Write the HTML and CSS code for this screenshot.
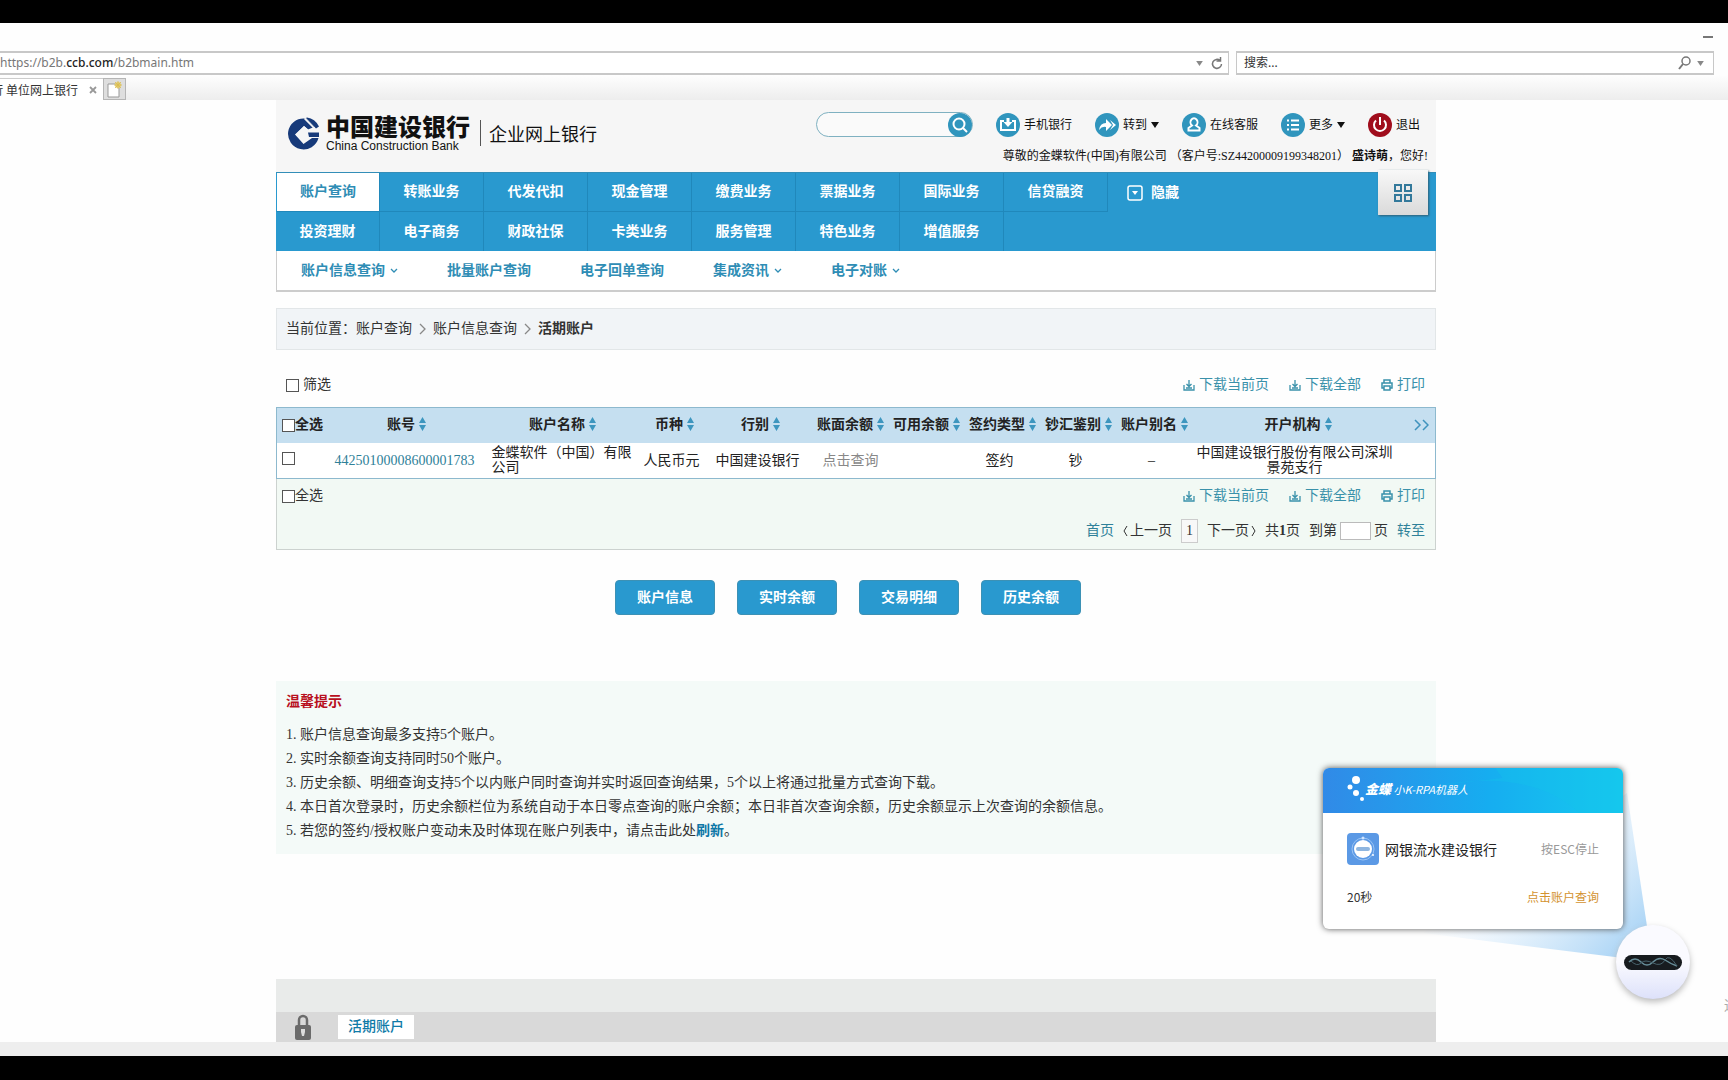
FILE: index.html
```html
<!DOCTYPE html>
<html lang="zh-CN">
<head>
<meta charset="utf-8">
<title>单位网上银行</title>
<link rel="stylesheet" href="styles.css">
</head>
<body>
<svg class="defs" aria-hidden="true">
  <symbol id="caret" viewBox="0 0 8 6"><path d="M1 1l3 3 3-3" fill="none" stroke="currentColor" stroke-width="1.3"/></symbol>
  <symbol id="tri" viewBox="0 0 8 6"><path d="M0 0h8L4 6z" fill="currentColor"/></symbol>
  <symbol id="sort" viewBox="0 0 7 14"><path d="M0 6l3.500-6L7 6zM0 8h7l-3.500 6z" fill="#3d96bf"/></symbol>
  <symbol id="gt" viewBox="0 0 7 12"><path d="M1 1l5 5-5 5" fill="none" stroke="currentColor" stroke-width="1.300"/></symbol>
  <symbol id="dl" viewBox="0 0 12 12"><path d="M1 6v5h10V6M6 1v6M3.500 5L6 7.500 8.500 5M3 9h6" fill="none" stroke="currentColor" stroke-width="1.300"/></symbol>
  <symbol id="print" viewBox="0 0 12 12"><path d="M3 4V1h6v3M3 9H1V4h10v5H9M3 7h6v4H3z" fill="none" stroke="currentColor" stroke-width="1.500"/></symbol>
</svg>

<div class="screen">
  <div class="browser-title"><span class="minimize"></span></div>
  <div class="address-row">
    <div class="address"><span class="url">https://b2b.<b>ccb.com</b>/b2bmain.htm</span>
      <svg class="tri" width="7" height="5"><use href="#tri"/></svg>
      <svg width="12" height="14" viewBox="0 0 12 14"><path d="M9 4.500A4.500 4.500 0 1 0 10.500 8M9.500 1v4H5.500" fill="none" stroke="#777" stroke-width="1.500"/></svg>
    </div>
    <div class="web-search"><input type="text" aria-label="搜索" placeholder="搜索...">
      <svg width="13" height="14" viewBox="0 0 13 14"><circle cx="8" cy="5" r="4" fill="none" stroke="#777" stroke-width="1.500"/><path d="M5 8l-4 5" stroke="#777" stroke-width="2"/></svg>
      <svg class="tri" width="7" height="5"><use href="#tri"/></svg>
    </div>
    <span class="edge-dot"></span>
  </div>
  <div class="tab-row">
    <div class="tab"><span>行 单位网上银行</span>
      <button class="tab-close" type="button" aria-label="关闭"><svg width="8" height="8" viewBox="0 0 8 8"><path d="M1 1l6 6M7 1L1 7" stroke="#999" stroke-width="1.800"/></svg></button></div>
    <button class="tab-new" type="button" aria-label="新标签"><svg width="15" height="17" viewBox="0 0 15 17"><path d="M1 3h11v13H1z" fill="#fff" stroke="#999"/><circle cx="11" cy="4" r="3" fill="#e6cf74"/><path d="M11 0v8M7 4h8M8 1l6 6M14 1L8 7" stroke="#d8bb50" stroke-width=".8"/></svg></button>
  </div>

  <main class="viewport">
    <div class="page">
      <header class="header">
        <div class="brand">
          <svg width="33" height="33" viewBox="0 0 33 33"><path d="M18 1.500A15.500 15.500 0 1 0 31.500 21H25L16.500 27 8 17.500 17 9 21 12.500 27 10z" fill="#173a7a"/><path d="M17 9L8.500 17.500 16.500 25.500 22 20V16L23 14z" fill="#f6f6f6"/><path d="M20 .5q8 1 12 9l-3 2L19 1zM21 15.500h11v4.500H22z" fill="#173a7a"/><path d="M17.500 1.500l10 10" stroke="#f6f6f6" stroke-width="1.500"/></svg>
          <div class="bank"><strong>中国建设银行</strong><span>China Construction Bank</span></div>
          <span class="portal">企业网上银行</span>
        </div>
        <div class="header-right">
          <div class="tools">
            <form class="site-search"><input type="text" aria-label="站内搜索"><button type="button" aria-label="搜索"><svg width="24" height="24" viewBox="0 0 24 24"><circle cx="11" cy="11" r="5.500"/><path d="M15 15l4 4"/></svg></button></form>
            <a class="tool" href="#"><svg width="24" height="24" viewBox="0 0 24 24"><circle class="disc" cx="12" cy="12" r="12"/><path d="M8 8H5v9h14V8h-3"/><path class="solid" d="M10.500 5h3v4h3L12 14 7.500 9h3z"/></svg>手机银行</a>
            <a class="tool tool-go" href="#"><svg width="24" height="24" viewBox="0 0 24 24"><circle class="disc" cx="12" cy="12" r="12"/><path class="solid" d="M4 17q1-7 7-7V6l6 6-6 6v-4q-4-1-7 3zM15 7l6 5-6 5 3-5z"/></svg>转到<svg class="drop" width="8" height="6"><use href="#tri"/></svg></a>
            <a class="tool tool-chat" href="#"><svg width="24" height="24" viewBox="0 0 24 24"><circle class="disc" cx="12" cy="12" r="12"/><path d="M10 12.500a3.500 4 0 1 1 4 0l3.500 2.500v2.500h-11V15z"/></svg>在线客服</a>
            <a class="tool" href="#"><svg width="24" height="24" viewBox="0 0 24 24"><circle class="disc" cx="12" cy="12" r="12"/><path d="M6 7.500h2M10 7.500h8M6 12h2M10 12h8M6 16.500h2M10 16.500h8"/></svg>更多<svg class="drop" width="8" height="6"><use href="#tri"/></svg></a>
            <a class="tool tool-exit" href="#"><svg width="24" height="24" viewBox="0 0 24 24"><circle class="disc" cx="12" cy="12" r="12"/><path d="M8 7.500a6 6 0 1 0 8 0M12 4v8"/></svg>退出</a>
          </div>
          <p class="greeting"><span>尊敬的金蝶软件(中国)有限公司</span><span>（客户号:SZ44200009199348201）</span><span><b>盛诗萌</b>，您好!</span></p>
        </div>
      </header>

      <nav class="nav">
        <div class="nav-row nav-first">
          <a class="active" href="#">账户查询</a><a href="#">转账业务</a><a href="#">代发代扣</a><a href="#">现金管理</a><a href="#">缴费业务</a><a href="#">票据业务</a><a href="#">国际业务</a><a href="#">信贷融资</a>
          <button class="hide" type="button"><svg width="16" height="16" viewBox="0 0 16 16"><rect x="1" y="1" width="14" height="14" rx="2" fill="none" stroke="#fff" stroke-width="1.500"/><path d="M5 6h6l-3 4z" fill="#fff"/></svg>隐藏</button>
        </div>
        <div class="nav-row"><a href="#">投资理财</a><a href="#">电子商务</a><a href="#">财政社保</a><a href="#">卡类业务</a><a href="#">服务管理</a><a href="#">特色业务</a><a href="#">增值服务</a></div>
        <button class="grid-button" type="button" aria-label="全部功能"><svg width="18" height="18" viewBox="0 0 18 18"><path d="M1 1h6v6H1zM11 1h6v6h-6zM1 11h6v6H1zM11 11h6v6h-6z" fill="none" stroke="#33799b" stroke-width="2"/></svg></button>
      </nav>
      <nav class="subnav"><a href="#">账户信息查询<svg width="8" height="6"><use href="#caret"/></svg></a><a href="#">批量账户查询</a><a href="#">电子回单查询</a><a href="#">集成资讯<svg width="8" height="6"><use href="#caret"/></svg></a><a href="#">电子对账<svg width="8" height="6"><use href="#caret"/></svg></a></nav>

      <div class="crumbs"><span>当前位置：账户查询</span><svg width="7" height="12"><use href="#gt"/></svg><span>账户信息查询</span><svg width="7" height="12"><use href="#gt"/></svg><b>活期账户</b></div>

      <div class="filter-row">
        <label class="filter"><input type="checkbox">筛选</label>
        <div class="actions"><a href="#"><svg width="12" height="12"><use href="#dl"/></svg>下载当前页</a><a href="#"><svg width="12" height="12"><use href="#dl"/></svg>下载全部</a><a href="#"><svg width="12" height="12"><use href="#print"/></svg>打印</a></div>
      </div>

      <table class="accounts">
        <colgroup><col class="w-check"><col class="w-no"><col class="w-name"><col class="w-cur"><col class="w-bank"><col class="w-std"><col class="w-std"><col class="w-std"><col class="w-std"><col class="w-std"><col><col class="w-more"></colgroup>
        <thead><tr>
          <th class="check"><label><input type="checkbox">全选</label></th>
          <th>账号<svg width="7" height="14"><use href="#sort"/></svg></th>
          <th>账户名称<svg width="7" height="14"><use href="#sort"/></svg></th>
          <th>币种<svg width="7" height="14"><use href="#sort"/></svg></th>
          <th>行别<svg width="7" height="14"><use href="#sort"/></svg></th>
          <th>账面余额<svg width="7" height="14"><use href="#sort"/></svg></th>
          <th>可用余额<svg width="7" height="14"><use href="#sort"/></svg></th>
          <th>签约类型<svg width="7" height="14"><use href="#sort"/></svg></th>
          <th>钞汇鉴别<svg width="7" height="14"><use href="#sort"/></svg></th>
          <th>账户别名<svg width="7" height="14"><use href="#sort"/></svg></th>
          <th>开户机构<svg width="7" height="14"><use href="#sort"/></svg></th>
          <th><a class="more" href="#" aria-label="更多列"><svg width="15" height="12" viewBox="0 0 15 12"><path d="M1 1l5 5-5 5M9 1l5 5-5 5" fill="none" stroke="currentColor" stroke-width="1.500"/></svg></a></th>
        </tr></thead>
        <tbody><tr>
          <td class="check"><input type="checkbox" aria-label="选择账户"></td>
          <td class="number"><a href="#">44250100008600001783</a></td>
          <td class="name">金蝶软件（中国）有限公司</td>
          <td class="value">人民币元</td><td class="value">中国建设银行</td><td class="query">点击查询</td><td></td><td class="value">签约</td><td class="value">钞</td><td class="value">–</td>
          <td class="branch">中国建设银行股份有限公司深圳景苑支行</td><td></td>
        </tr></tbody>
      </table>
      <div class="table-foot">
        <div class="foot-row"><label><input type="checkbox">全选</label>
          <div class="actions"><a href="#"><svg width="12" height="12"><use href="#dl"/></svg>下载当前页</a><a href="#"><svg width="12" height="12"><use href="#dl"/></svg>下载全部</a><a href="#"><svg width="12" height="12"><use href="#print"/></svg>打印</a></div></div>
        <div class="pager"><a href="#">首页</a><span><svg width="5" height="12" viewBox="0 0 5 12"><path d="M4 1L1 6l3 5" fill="none" stroke="#333"/></svg>上一页</span><span class="current">1</span><span>下一页<svg width="5" height="12" viewBox="0 0 5 12"><path d="M1 1l3 5-3 5" fill="none" stroke="#333"/></svg></span><span class="total">共<b>1</b>页</span><label>到第<input type="text" aria-label="页码">页</label><a href="#">转至</a></div>
      </div>

      <div class="buttons"><button type="button">账户信息</button><button type="button">实时余额</button><button type="button">交易明细</button><button type="button">历史余额</button></div>

      <section class="tips">
        <h2>温馨提示</h2>
        <p>1. 账户信息查询最多支持5个账户。</p>
        <p>2. 实时余额查询支持同时50个账户。</p>
        <p>3. 历史余额、明细查询支持5个以内账户同时查询并实时返回查询结果，5个以上将通过批量方式查询下载。</p>
        <p>4. 本日首次登录时，历史余额栏位为系统自动于本日零点查询的账户余额；本日非首次查询余额，历史余额显示上次查询的余额信息。</p>
        <p>5. 若您的签约/授权账户变动未及时体现在账户列表中，请点击此处<a href="#">刷新</a>。</p>
      </section>

      <footer class="dock">
        <div class="dock-tabs">
          <svg width="16" height="26" viewBox="0 0 16 26"><path d="M4 12V6a4 4 0 0 1 8 0v6" fill="none" stroke="#6b6b6b" stroke-width="2.500"/><rect y="11" width="16" height="15" rx="2" fill="#6b6b6b"/><path d="M6 15h4v3l-1 4H7l-1-4z" fill="#ddd"/></svg>
          <a href="#">活期账户</a>
        </div>
      </footer>
    </div>
    <span class="edge-text">通</span>
  </main>
  <div class="status-bar"></div>

  <aside class="robot">
    <svg class="beam" width="370" height="230" viewBox="0 0 370 230"><defs><linearGradient id="bm" gradientUnits="userSpaceOnUse" x1="190" y1="60" x2="315" y2="180"><stop offset="0" stop-color="#d9ecfc" stop-opacity="0"/><stop offset="1" stop-color="#a6d2f5"/></linearGradient></defs><path d="M304 25L325 165 300 190 100 165z" fill="url(#bm)"/></svg>
    <div class="robot-card">
      <div class="robot-head">
        <svg class="wave" width="301" height="45" viewBox="0 0 301 45" preserveAspectRatio="none"><path d="M110 18Q210 0 257 45H301V0H173L180 10z" fill="#13c4ea" opacity=".35"/></svg>
        <svg width="18" height="26" viewBox="0 0 18 26"><g fill="#fff"><circle cx="9" cy="4" r="4"/><circle cx="3" cy="11" r="2.500"/><circle cx="9" cy="17" r="3"/><circle cx="15" cy="23" r="2"/></g></svg>
        <span class="robot-brand"><b>金蝶</b> 小K-RPA机器人</span>
      </div>
      <div class="robot-body">
        <div class="robot-line"><svg width="32" height="32" viewBox="0 0 32 32"><rect width="32" height="32" rx="4" fill="#5b99e5"/><circle cx="16" cy="16" r="11" fill="none" stroke="#9bc4f4"/><circle cx="16" cy="16" r="9" fill="#fff"/><rect x="9" y="14" width="14" height="4" rx="2" fill="#8fb6e0"/><circle cx="16" cy="5" r="1.500" fill="#cfe4ff"/><circle cx="26" cy="22" r="1" fill="#fff"/></svg><span class="job">网银流水建设银行</span><span class="esc">按ESC停止</span></div>
        <div class="robot-line"><span class="seconds">20秒</span><span class="step">点击账户查询</span></div>
      </div>
    </div>
    <svg class="ball" width="94" height="94" viewBox="0 0 94 94"><defs><linearGradient id="bl" x1="0" y1="0" x2="0" y2="1"><stop offset=".5" stop-color="#fafaff"/><stop offset="1" stop-color="#dde1fa"/></linearGradient></defs><circle cx="47" cy="47" r="37" fill="url(#bl)"/><rect x="18" y="40" width="58" height="15" rx="7.500" fill="#171b1f"/><path d="M23 47q6-6 12 0t12 0 12-2 12 6" fill="none" stroke="#668c98" stroke-width="1.500"/><path d="M25 46q6 6 10 2t12 0 12-3 12 6" fill="none" stroke="#48636d"/></svg>
  </aside>
</div>
</body>
</html>
```
FILE: styles.css
```css
* { box-sizing: border-box; }
body { margin: 0; background: #000; color: #333; font: 14px/16px "Liberation Serif", "Noto Sans CJK SC", sans-serif; }
a { color: inherit; text-decoration: none; }
button { margin: 0; padding: 0; border: 0; background: none; color: inherit; font: inherit; }
p, h2 { margin: 0; }
svg { display: block; flex: none; }
.defs { position: absolute; width: 0; height: 0; }
.screen { position: relative; display: flex; flex-direction: column; min-height: 100vh; border: solid #000; border-width: 23px 0 24px; background: #fefefe; overflow: hidden; }

/* browser chrome */
.browser-title { display: flex; justify-content: flex-end; align-items: center; height: 28px; padding-right: 15px; }
.minimize { width: 10px; height: 2px; background: #777; }
.address-row { display: flex; gap: 7px; height: 24px; font-family: "Noto Sans", "Noto Sans CJK SC", sans-serif; font-size: 12px; color: #777; }
.address, .web-search { display: flex; align-items: center; border: 1px solid #c8c8c8; border-width: 2px 1px; background: #fff; }
.address { flex: 1; gap: 8px; padding-right: 5px; border-left: 0; }
.address b { color: #222; font-weight: 500; }
.url { flex: 1; }
.tri { color: #888; }
.web-search { flex: 0 0 478px; gap: 6px; padding: 0 9px 0 7px; }
.web-search input { flex: 1; min-width: 0; padding: 0; border: 0; outline: 0; background: none; font: inherit; }
.web-search input::placeholder { color: #333; }
.edge-dot { width: 7px; }
.tab-row { display: flex; height: 25px; padding-top: 3px; background: linear-gradient(#fefefe, #ededed); font-family: "Noto Sans CJK SC", sans-serif; font-size: 12px; }
.tab { display: flex; justify-content: flex-end; align-items: center; width: 103px; padding-right: 6px; gap: 11px; border-top: 1px solid #ccc; background: #fff; overflow: hidden; white-space: nowrap; }
.tab-new { display: flex; justify-content: center; align-items: center; width: 23px; border: 1px solid #b5b5b5; background: #dedede; }

/* page */
.viewport { position: relative; flex: 1; display: flex; justify-content: center; padding-right: 16px; }
.page { display: flex; flex-direction: column; flex: 0 1 1160px; min-width: 0; }
.header { display: flex; justify-content: space-between; height: 72px; padding: 12px 8px 0 11px; background: #f6f6f6; color: #111; }
.brand { display: flex; align-items: center; align-self: flex-start; height: 42px; gap: 6px; }
.bank { display: flex; flex-direction: column; padding-right: 4px; font-family: "Liberation Sans", "Noto Sans CJK SC", sans-serif; }
.bank strong { font-size: 24px; line-height: 26px; font-weight: 900; }
.bank span { font-size: 12px; line-height: 10px; }
.portal { padding-left: 8px; border-left: 1px solid #555; font: 18px/26px "Noto Sans CJK SC", sans-serif; }
.header-right { display: flex; flex-direction: column; gap: 11px; font-size: 12px; }
.tools { display: flex; justify-content: flex-end; align-items: center; height: 25px; gap: 23px; padding-right: 8px; }
.site-search { display: flex; width: 157px; height: 25px; border: 1px solid #7fb1c1; border-radius: 13px; background: #fafafa; }
.site-search input { flex: 1; min-width: 0; padding: 0 12px; border: 0; outline: 0; background: none; }
.site-search button { width: 24px; height: 24px; border-radius: 12px; background: #3095bd; }
.site-search svg, .tool svg { fill: none; stroke: #fff; stroke-width: 2; }
.tool { display: flex; align-items: center; gap: 4px; }
.tool .disc { fill: #3095bd; stroke: none; }
.tool .solid { fill: #fff; stroke: none; }
.tool .drop { stroke: none; }
.tool-exit .disc { fill: #a00d1c; }
.greeting { display: flex; justify-content: flex-end; gap: 3px; white-space: nowrap; }
.nav { position: relative; background: #2999cf; color: #fff; font-weight: 600; border-top: 1px solid #338eb8; }
.nav-row { display: flex; height: 39px; }
.nav-row a { display: flex; justify-content: center; align-items: center; width: 104px; border-right: 1px solid #2088bb; }
.nav-first a { border-bottom: 1px solid #2088bb; }
.nav .active { border-left: 1px solid #2999cf; background: #fff; color: #2f8db5; }
.hide { display: flex; align-items: center; gap: 8px; padding-left: 19px; font-weight: 600; }
.grid-button { position: absolute; top: -3px; right: 8px; display: flex; justify-content: center; align-items: center; width: 50px; height: 45px; background: linear-gradient(#f8f8f8, #dadada); box-shadow: 1px 1px 2px #305f75; }
.subnav { display: flex; gap: 49px; height: 41px; padding: 0 24px; border: 1px solid #ccc; border-top: 0; border-bottom-width: 2px; background: #fff; color: #2f8db5; font-weight: 600; }
.subnav a { display: flex; align-items: center; gap: 5px; }
.crumbs { display: flex; align-items: center; gap: 7px; height: 42px; margin-top: 16px; padding: 0 9px; border: 1px solid #e2e6e8; background: #f1f4f7; }
.crumbs svg { color: #888; }
.filter-row { display: flex; justify-content: space-between; align-items: center; margin-top: 21px; padding: 0 11px 0 10px; height: 28px; }
input[type=checkbox] { appearance: none; flex: none; width: 13px; height: 13px; margin: 0; border: 1px solid #555; background: #fff; }
label { display: flex; align-items: center; }
.filter { gap: 4px; }
.actions { display: flex; gap: 20px; color: #3a91aa; }
.actions a { display: flex; align-items: center; gap: 4px; }
.accounts { width: 100%; margin-top: 8px; border: 1px solid #8db9ce; border-collapse: collapse; table-layout: fixed; color: #222; }
.accounts th, .accounts td { padding: 0; text-align: center; }
.accounts thead { background: #c5dff0; }
.accounts th { height: 35px; white-space: nowrap; font-weight: 600; }
.accounts th svg { display: inline-block; margin-left: 4px; vertical-align: -2px; }
.accounts td { height: 36px; background: #fff; line-height: 15px; }
.accounts .check { padding-left: 5px; text-align: left; }
.accounts .name { padding-left: 7px; text-align: left; }
.accounts .number { padding-right: 4px; color: #2f8199; }
.accounts .query { color: #888; }
.accounts .value { padding-right: 6px; }
.accounts .branch { padding: 0 9px 0 2px; }
.more { color: #3f93bd; }
.w-check { width: 52px; }
.w-no { width: 156px; }
.w-name { width: 156px; }
.w-cur { width: 68px; }
.w-bank { width: 104px; }
.w-std { width: 76px; }
.w-more { width: 32px; }
.table-foot { height: 71px; padding: 9px 10px 0 5px; border: 1px solid #ccd2cf; border-top: 0; background: #f2f9f4; }
.foot-row { display: flex; justify-content: space-between; }
.pager { display: flex; justify-content: flex-end; align-items: center; gap: 9px; height: 24px; margin-top: 15px; }
.pager span { display: flex; align-items: center; gap: 2px; }
.pager a { color: #2f8199; }
.pager .current { height: 24px; padding: 0 4px; border: 1px solid #ccc; background: #f8f8f8; }
.pager .total { gap: 0; }
.pager label { gap: 3px; }
.pager input { width: 31px; height: 18px; padding: 0; border: 1px solid #bbb; background: #fff; }
.buttons { display: flex; justify-content: center; gap: 22px; margin: 30px 16px 0 0; }
.buttons button { width: 100px; height: 35px; border: 1px solid #3c91b5; border-radius: 4px; background: #2999cf; color: #fff; font-weight: 600; }
.tips { margin-top: 66px; padding: 9px 10px 11px; background: #f4faf8; line-height: 24px; }
.tips h2 { margin-bottom: 9px; color: #b80f20; font-size: 14px; line-height: 24px; }
.tips a { color: #0d77a7; font-weight: 700; }
.dock { margin-top: auto; padding-top: 33px; background: #e9ebea; }
.dock-tabs { display: flex; align-items: center; gap: 27px; height: 30px; padding-left: 19px; background: #d9d9d9; }
.dock-tabs a { padding: 4px 10px; background: #fff; color: #0f7ba8; font-weight: 500; }
.edge-text { position: absolute; right: -10px; bottom: 28px; color: #aaa; }
.status-bar { height: 14px; background: #eee; }

/* floating assistant */
.robot { position: absolute; right: 105px; bottom: 127px; width: 300px; font-family: "Noto Sans CJK SC", sans-serif; font-size: 12px; }
.robot-card { position: relative; height: 161px; border-radius: 6px; background: #fff; box-shadow: 0 0 6px #555; overflow: hidden; }
.robot-head { position: relative; display: flex; align-items: center; gap: 0; height: 45px; padding: 0 0 4px 24px; background: linear-gradient(90deg, #318ae7, #16adf0 55%, #16caef); color: #fff; }
.wave { position: absolute; left: 0; top: 0; width: 100%; }
.robot-brand { position: relative; font-style: italic; font-size: 11px; }
.robot-brand b { font-size: 13px; font-weight: 900; }
.robot-body { display: flex; flex-direction: column; gap: 24px; padding: 20px 24px 0; }
.robot-line { display: flex; align-items: center; gap: 6px; }
.job { color: #222; font-size: 14px; }
.esc, .step { margin-left: auto; }
.esc { color: #999; }
.step { color: #d3922f; }
.beam { position: absolute; left: 0; top: 0; }
.ball { position: absolute; left: 283px; top: 147px; filter: drop-shadow(0 3px 3px #bbb); }
```
